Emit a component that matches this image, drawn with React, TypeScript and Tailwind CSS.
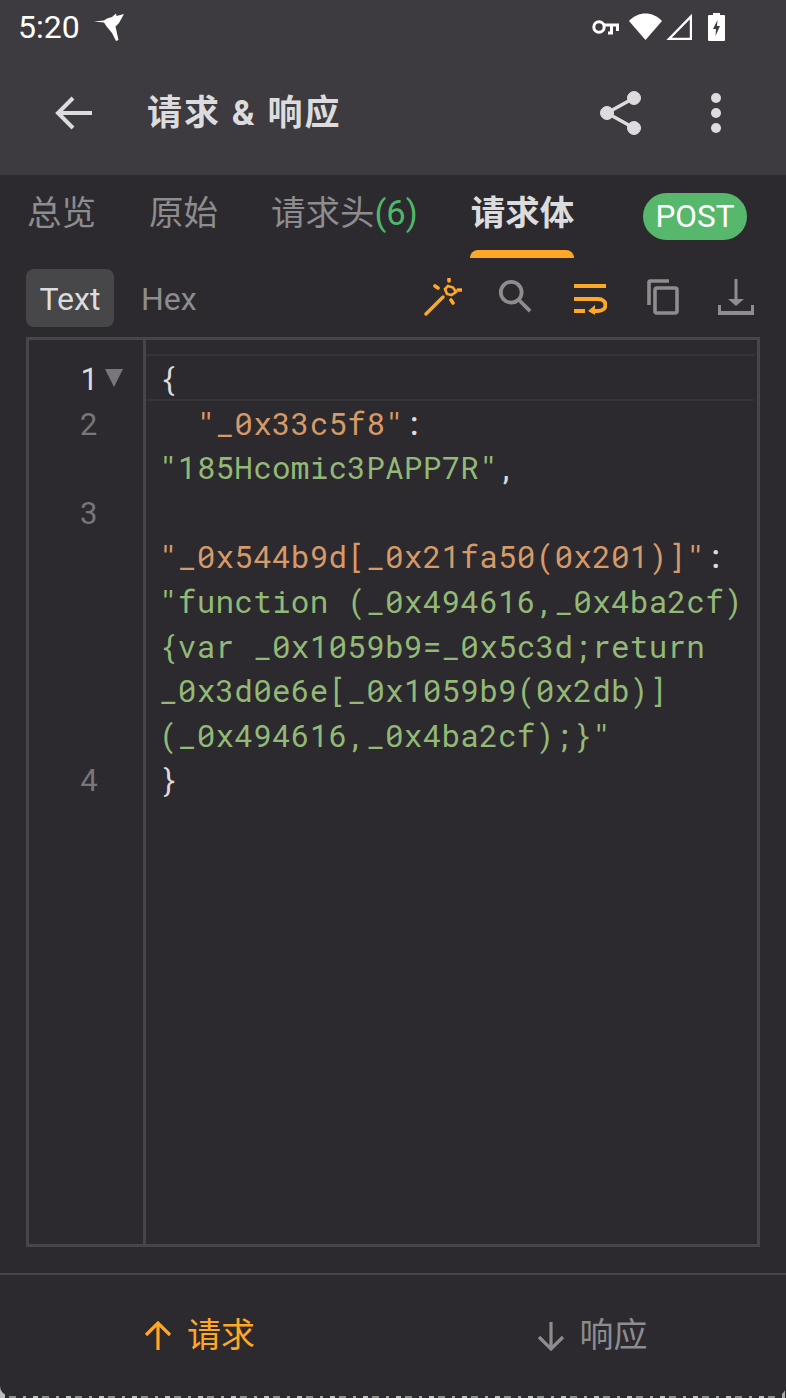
import React from "react";

const mono = { fontFamily: '"Roboto Mono","DejaVu Sans Mono","Liberation Mono",monospace' };

export default function App() {
  return (
    <div className="relative h-[1398px] w-[786px] overflow-hidden bg-[repeating-linear-gradient(90deg,#bdbdbd_0_5px,#2c2a2e_5px_9px,#8f8f8f_9px_16px,#2c2a2e_16px_23px,#a8a8a8_23px_26px,#2c2a2e_26px_33px)] font-['Roboto','Noto_Sans_CJK_SC',sans-serif]">
      <div className="flex h-[1396px] flex-col overflow-hidden rounded-b-[10px] bg-[#2c2a2e]">
        <div className="h-[175px] shrink-0 bg-[#3d3b3f]">
          <div className="flex h-[53px] items-center justify-between pl-[18px] pr-[61px]">
            <div className="flex items-center gap-[14px]">
              <span className="text-[32px] leading-none text-white">5:20</span>
              <svg width="32" height="30" viewBox="0 0 32 30" fill="#fff">
                <path d="M0 9.5 L10 8.5 L13 6.5 L18 5 L22 1.5 L22.5 4 L30 2 L25 11 L21.5 14.5 L24.5 28 L22 29 L18 21 L13 15 L10 10.5Z" />
              </svg>
            </div>
            <div className="flex items-center">
              <svg width="27" height="18" viewBox="0 0 27 18" fill="none" stroke="#fff" strokeWidth="3">
                <circle cx="7" cy="9" r="5.2" />
                <path d="M12 7 H25.5 V13 M19.5 7 V15 H16" />
              </svg>
              <svg className="ml-[10px]" width="33" height="28" viewBox="0 0 33 28" fill="#fff"><path d="M0 8 C9 -2 24 -2 33 8 L16.5 27Z" /></svg>
              <svg className="ml-[4px]" width="26" height="27" viewBox="0 0 26 27" fill="none" stroke="#fff" strokeWidth="2.4"><path d="M25 3.5 V26 H3Z" /></svg>
              <svg className="ml-[16px]" width="17" height="28" viewBox="0 0 17 28" fill="#fff">
                <path d="M5 0 H12 V2 H16 Q17 2 17 3 V27 Q17 28 16 28 H1 Q0 28 0 27 V3 Q0 2 1 2 H5Z" />
                <path d="M9.5 7 L5 16 H8 L7.5 23 L12 13 H9Z" fill="#3d3b3f" />
              </svg>
            </div>
          </div>
          <div className="flex h-[122px] items-center pb-[2px]">
            <svg className="ml-[54px] shrink-0" width="40" height="36" viewBox="0 0 40 36" fill="none" stroke="#dcdbdd" strokeWidth="4"><path d="M38 18 H4 M19 3 L4 18 L19 33" /></svg>
            <span className="ml-[53px] whitespace-nowrap text-[35px] font-bold leading-none tracking-[2px] text-[#dcdbdd]">请求 &amp; 响应</span>
            <div className="ml-auto flex items-center pr-[65px]">
              <svg width="44" height="46" viewBox="0 0 44 46" fill="#dcdbdd" stroke="#dcdbdd">
                <circle cx="35" cy="8" r="6.5" /><circle cx="8" cy="23" r="6.5" /><circle cx="35" cy="38" r="6.5" />
                <path d="M35 8 L8 23 L35 38" fill="none" strokeWidth="3.5" />
              </svg>
              <div className="ml-[68px] flex flex-col gap-[5px]">
                <span className="h-[10px] w-[10px] rounded-full bg-[#dcdbdd]" />
                <span className="h-[10px] w-[10px] rounded-full bg-[#dcdbdd]" />
                <span className="h-[10px] w-[10px] rounded-full bg-[#dcdbdd]" />
              </div>
            </div>
          </div>
        </div>

        <div className="relative flex h-[84px] shrink-0 items-start whitespace-nowrap pl-[27px] pt-[18px] text-[34.5px] leading-[40px] text-[#8d8c8e]">
          <span>总览</span>
          <span className="ml-[53px]">原始</span>
          <span className="ml-[53px]">请求头<span className="text-[#4fb76a]">(6)</span></span>
          <span className="ml-[53px] font-bold text-[#dcdbdd]">请求体</span>
          <span className="absolute left-[643px] top-[18px] flex h-[47px] w-[104px] items-center justify-center rounded-full bg-[#57b86d] text-[31.5px] leading-none text-white">POST</span>
          <span className="absolute left-[470px] top-[75px] h-[8px] w-[104px] rounded-t-[8px] bg-[#ffa726]" />
        </div>

        <div className="flex h-[78px] shrink-0 items-start pl-[26px] pt-[10px]">
          <span className="flex h-[58px] w-[88px] items-center justify-center rounded-[8px] bg-[#474649] pt-[2px] text-[32px] text-[#dcdbdd]">Text</span>
          <span className="ml-[27px] flex h-[58px] items-center pt-[2px] text-[32px] text-[#8d8c8e]">Hex</span>
          <svg className="ml-[227px] mt-[9px] shrink-0" width="38" height="38" viewBox="0 0 38 38" fill="none" stroke="#ffa726" strokeWidth="3.4" strokeLinecap="round">
            <path d="M2 36 L19 19" />
            <path d="M24 8 L29 9.5 L32 14 L27.5 17 L23 16 L21 11Z" strokeWidth="2.6" />
            <path d="M25 1 V3 M11 8 L14 10 M34 12 H37 M27 22 L29 25" strokeWidth="3.6" />
          </svg>
          <svg className="ml-[36px] mt-[10px] shrink-0" width="34" height="34" viewBox="0 0 36 36" fill="none" stroke="#8d8c8e" strokeWidth="4"><circle cx="14" cy="14" r="11" /><path d="M22 22 L34 34" /></svg>
          <svg className="ml-[41px] mt-[14px] shrink-0" width="34" height="32" viewBox="0 0 34 32" fill="none" stroke="#ffa726" strokeWidth="4"><path d="M1 3 H33 M1 16 H25 C35 16 35 28 25 28 H18 M1 28 H12" /><path d="M22 22 V32 L15 28Z" fill="#ffa726" stroke="none" /></svg>
          <svg className="ml-[40px] mt-[10px] shrink-0" width="32" height="36" viewBox="0 0 32 36" fill="none" stroke="#8d8c8e" strokeWidth="3.6"><path d="M2 26 V3 A1 1 0 0 1 3 2 H22" /><rect x="8" y="9" width="22" height="25" rx="2" /></svg>
          <svg className="ml-[39px] mt-[10px] shrink-0" width="36" height="36" viewBox="0 0 36 36" fill="#8d8c8e"><rect x="16.5" y="0" width="3" height="21" /><path d="M10 20 H26 L18 27Z" /><path d="M0 26 H3 V32 H33 V26 H36 V36 H0Z" /></svg>
        </div>

        <div className="mx-[26px] flex h-[910px] shrink-0 border-[3px] border-[#464549]" style={mono}>
          <div className="w-[117px] shrink-0 border-r-[3px] border-[#464549] pt-[16px] text-[31px] leading-[44.6px] text-[#77767a]">
            <div className="relative h-[44.6px] pl-[51px] text-[#dcdbdd]">1<svg className="absolute left-[76px] top-[13px]" width="18" height="18" viewBox="0 0 18 18" fill="#77767a"><path d="M0 0 H18 L9 18Z" /></svg></div>
            <div className="h-[89.2px] pl-[51px]">2</div>
            <div className="h-[267.6px] pl-[51px]">3</div>
            <div className="pl-[51px]">4</div>
          </div>
          <div className="relative flex-1 whitespace-nowrap pl-[13px] pt-[16px] text-[31px] leading-[44.6px] tracking-[0.23px] text-[#dcdbdd]">
            <span className="absolute left-0 right-[3px] top-[14px] h-[2px] bg-[#353437]" />
            <span className="absolute left-0 right-[3px] top-[59px] h-[2px] bg-[#353437]" />
            <div>{"{"}</div>
            <div className="whitespace-pre">  <span className="text-[#d69a68]">"_0x33c5f8"</span>:</div>
            <div className="text-[#92b976]">"185Hcomic3PAPP7R"<span className="text-[#dcdbdd]">,</span></div>
            <div className="h-[44.6px]" />
            <div className="text-[#d69a68]">"_0x544b9d[_0x21fa50(0x201)]"<span className="text-[#dcdbdd]">:</span></div>
            <div className="text-[#92b976]">"function (_0x494616,_0x4ba2cf)</div>
            <div className="text-[#92b976]">{"{var _0x1059b9=_0x5c3d;return"}</div>
            <div className="text-[#92b976]">_0x3d0e6e[_0x1059b9(0x2db)]</div>
            <div className="text-[#92b976]">{"(_0x494616,_0x4ba2cf);}\""}</div>
            <div>{"}"}</div>
          </div>
        </div>

        <div className="mt-[26px] flex h-[123px] shrink-0 border-t-[2px] border-[#464549] text-[34px]">
          <div className="flex w-1/2 items-center justify-center gap-[14px] pl-[5px] text-[#ffa726]">
            <svg width="30" height="30" viewBox="0 0 30 30" fill="none" stroke="#ffa726" strokeWidth="3.2"><path d="M15 29 V2 M3 14 L15 2 L27 14" /></svg>
            <span>请求</span>
          </div>
          <div className="flex w-1/2 items-center justify-center gap-[14px] pl-[4px] text-[#8d8c8e]">
            <svg width="30" height="30" viewBox="0 0 30 30" fill="none" stroke="#8d8c8e" strokeWidth="3.2"><path d="M15 1 V28 M3 16 L15 28 L27 16" /></svg>
            <span>响应</span>
          </div>
        </div>
      </div>
    </div>
  );
}
